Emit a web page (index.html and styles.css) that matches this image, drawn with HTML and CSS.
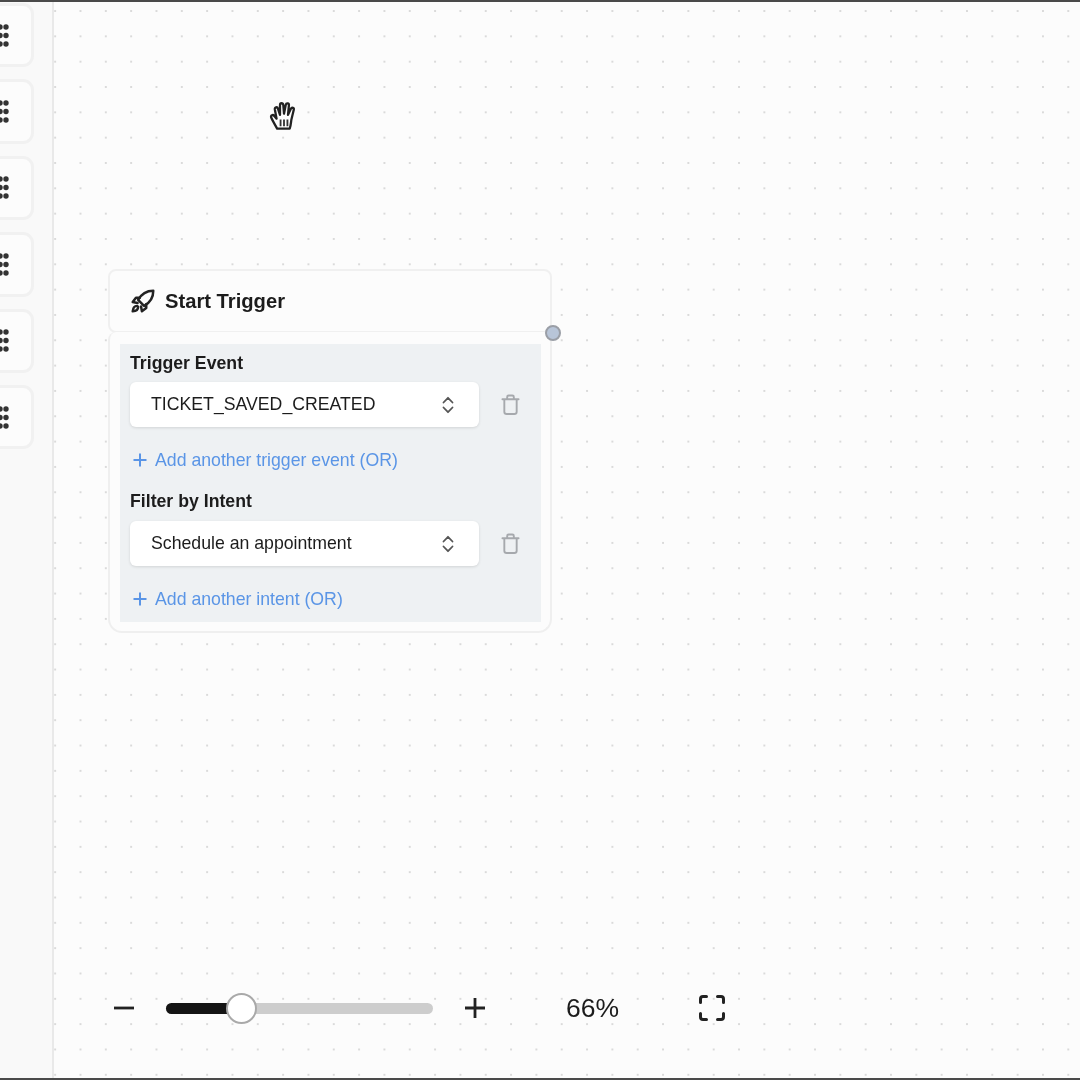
FILE: index.html
```html
<!DOCTYPE html>
<html lang="en">
<head>
<meta charset="utf-8">
<title>Start Trigger</title>
<link rel="stylesheet" href="styles.css">
</head>
<body>
<div class="app">
  <div class="edge"></div>
  <div class="main">
    <aside class="sidebar">
      <div class="tool"><svg class="grip" viewBox="0 0 12 23"><g><circle cx="3" cy="3" r="2.7"/><circle cx="9" cy="3" r="2.7"/><circle cx="3" cy="11.500" r="2.7"/><circle cx="9" cy="11.500" r="2.7"/><circle cx="3" cy="20" r="2.7"/><circle cx="9" cy="20" r="2.7"/></g></svg></div>
      <div class="tool"><svg class="grip" viewBox="0 0 12 23"><g><circle cx="3" cy="3" r="2.7"/><circle cx="9" cy="3" r="2.7"/><circle cx="3" cy="11.500" r="2.7"/><circle cx="9" cy="11.500" r="2.7"/><circle cx="3" cy="20" r="2.7"/><circle cx="9" cy="20" r="2.7"/></g></svg></div>
      <div class="tool"><svg class="grip" viewBox="0 0 12 23"><g><circle cx="3" cy="3" r="2.7"/><circle cx="9" cy="3" r="2.7"/><circle cx="3" cy="11.500" r="2.7"/><circle cx="9" cy="11.500" r="2.7"/><circle cx="3" cy="20" r="2.7"/><circle cx="9" cy="20" r="2.7"/></g></svg></div>
      <div class="tool"><svg class="grip" viewBox="0 0 12 23"><g><circle cx="3" cy="3" r="2.7"/><circle cx="9" cy="3" r="2.7"/><circle cx="3" cy="11.500" r="2.7"/><circle cx="9" cy="11.500" r="2.7"/><circle cx="3" cy="20" r="2.7"/><circle cx="9" cy="20" r="2.7"/></g></svg></div>
      <div class="tool"><svg class="grip" viewBox="0 0 12 23"><g><circle cx="3" cy="3" r="2.7"/><circle cx="9" cy="3" r="2.7"/><circle cx="3" cy="11.500" r="2.7"/><circle cx="9" cy="11.500" r="2.7"/><circle cx="3" cy="20" r="2.7"/><circle cx="9" cy="20" r="2.7"/></g></svg></div>
      <div class="tool"><svg class="grip" viewBox="0 0 12 23"><g><circle cx="3" cy="3" r="2.7"/><circle cx="9" cy="3" r="2.7"/><circle cx="3" cy="11.500" r="2.7"/><circle cx="9" cy="11.500" r="2.7"/><circle cx="3" cy="20" r="2.7"/><circle cx="9" cy="20" r="2.7"/></g></svg></div>
    </aside>
    <main class="canvas">
      <svg class="hand" viewBox="0 0 26 28"><path class="hand-shape" d="M7 25C5 21.500 3 18 1.800 15.300C1.200 13.300 3.300 12.400 4.500 14L6.500 16.300L5 8.300C4.700 6.200 7.100 5.600 7.700 7.600L9.500 13L9.500 4.500C9.500 2.300 12.100 2.300 12.400 4.500L13 12L14.500 4.300C15 2.200 17.600 2.600 17.300 4.700L16.500 13L19 7.700C19.900 6 22.100 6.900 21.500 8.800L19.500 17C19 20 19 22.500 18 25Z"/><path class="hand-lines" d="M10 17V23M13 17V23M16 17V23"/></svg>

      <section class="node">
        <header class="node-head">
          <svg class="rocket" viewBox="0 0 24 24"><path d="M21.500 2.500C15 2.500 10.500 5.500 7.500 11L13 16.500C18.500 13.500 21.500 9 21.500 2.500Z"/><path d="M9 9H5.500L2.500 13L7 13.800"/><path d="M15 15V18.500L11 21.500L10.200 17"/><path d="M6.500 16.500C4.500 16.500 2.800 18 2.500 21.500C6 21.200 7.500 19.500 7.500 17.500Z"/></svg>
          <h2 class="node-title">Start Trigger</h2>
        </header>
        <span class="handle"></span>
        <div class="node-body">
          <div class="panel">
            <div class="field-label">Trigger Event</div>
            <div class="field-row">
              <div class="select"><span>TICKET_SAVED_CREATED</span><svg class="chevrons" viewBox="0 0 14 20"><path d="M2.500 7.500L7 2.800L11.500 7.500M2.500 12.500L7 17.200L11.500 12.500"/></svg></div>
              <svg class="trash" viewBox="0 0 20 22"><path d="M3.500 6V18.500C3.500 19.900 4.600 21 6 21H14C15.400 21 16.500 19.900 16.500 18.500V6M1.500 5.500H18.500M6.500 5.500V3C6.500 2 7.200 1.500 8 1.500H12C12.800 1.500 13.500 2 13.500 3V5.500"/></svg>
            </div>
            <div class="add-link"><svg class="plus-small" viewBox="0 0 14 14"><path d="M7 .5V13.500M.5 7H13.500"/></svg><span>Add another trigger event (OR)</span></div>
            <div class="field-label second">Filter by Intent</div>
            <div class="field-row">
              <div class="select"><span>Schedule an appointment</span><svg class="chevrons" viewBox="0 0 14 20"><path d="M2.500 7.500L7 2.800L11.500 7.500M2.500 12.500L7 17.200L11.500 12.500"/></svg></div>
              <svg class="trash" viewBox="0 0 20 22"><path d="M3.500 6V18.500C3.500 19.900 4.600 21 6 21H14C15.400 21 16.500 19.900 16.500 18.500V6M1.500 5.500H18.500M6.500 5.500V3C6.500 2 7.200 1.500 8 1.500H12C12.800 1.500 13.500 2 13.500 3V5.500"/></svg>
            </div>
            <div class="add-link last"><svg class="plus-small" viewBox="0 0 14 14"><path d="M7 .5V13.500M.5 7H13.500"/></svg><span>Add another intent (OR)</span></div>
          </div>
        </div>
      </section>

      <div class="zoom-bar">
        <svg class="zoom-btn" viewBox="0 0 20 20"><path d="M0 10H20"/></svg>
        <div class="track"><div class="fill"></div><div class="thumb"></div></div>
        <svg class="zoom-btn" viewBox="0 0 20 20"><path d="M0 10H20M10 0V20"/></svg>
        <span class="zoom-value">66%</span>
        <svg class="fit" viewBox="0 0 26 26"><path d="M1.500 7.500V4C1.500 2.500 2.500 1.500 4 1.500H7.500M18.500 1.500H22C23.500 1.500 24.500 2.500 24.500 4V7.500M24.500 18.500V22C24.500 23.500 23.500 24.500 22 24.500H18.500M7.500 24.500H4C2.500 24.500 1.500 23.500 1.500 22V18.500"/></svg>
      </div>
    </main>
  </div>
  <div class="edge"></div>
</div>
</body>
</html>
```
FILE: styles.css
```css
* { box-sizing: border-box; }
html, body { margin: 0; padding: 0; }
body {
  width: 1080px;
  height: 1080px;
  overflow: hidden;
  background: #fcfcfc;
  font-family: "Liberation Sans", Arial, sans-serif;
  color: #1c1c1c;
}
.app { display: flex; flex-direction: column; height: 1080px; filter: blur(.35px); }
.edge { height: 2px; flex: none; background: #4a4a4a; }
.main { flex: 1; display: flex; min-height: 0; }

.sidebar {
  width: 54px;
  flex: none;
  display: flex;
  flex-direction: column;
  gap: 12px;
  padding-top: 1px;
  overflow: hidden;
  background: #f9f9f9;
  border-right: 2px solid #e9e9e9;
}
.tool {
  width: 65px;
  height: 64.400px;
  flex: none;
  margin-left: -31px;
  display: flex;
  align-items: center;
  justify-content: flex-end;
  padding-right: 22px;
  background: #fcfcfc;
  border: 3px solid #f1f1f1;
  border-radius: 11px;
}
.grip { width: 12px; height: 23px; flex: none; fill: #333; }

.canvas {
  position: relative;
  flex: 1;
  background-color: #fcfcfc;
  background-image: radial-gradient(circle, #dadada 0, #dadada 1px, transparent 1.500px);
  background-size: 25.330px 25.330px;
  background-position: -11.500px -3.670px;
}
.hand { position: absolute; left: 215px; top: 98px; width: 30px; height: 32px; }
.hand-shape { fill: #fff; stroke: #222; stroke-width: 2; stroke-linejoin: round; }
.hand-lines { fill: none; stroke: #333; stroke-width: 1.600; }

.node { position: absolute; left: 54px; top: 267px; width: 444px; }
.node-head {
  height: 64px;
  display: flex;
  align-items: center;
  gap: 9px;
  padding-left: 20px;
  background: #fcfcfc;
  border: 2px solid #f0f0f0;
  border-radius: 8px;
}
.rocket { width: 26px; height: 26px; fill: none; stroke: #222; stroke-width: 2.300; stroke-linecap: round; stroke-linejoin: round; }
.node-title { margin: 0; font-size: 20.200px; font-weight: 700; line-height: 24px; }
.handle {
  position: absolute;
  right: -9px;
  top: 56px;
  width: 16px;
  height: 16px;
  border-radius: 50%;
  background: #b8c5d8;
  border: 2px solid #9a9ea6;
}
.node-body {
  padding: 12px 9px 9px 10px;
  margin-top: -1px;
  background: #fcfcfc;
  border: 2px solid #efefef;
  border-top: 0;
  border-radius: 8px 8px 14px 14px;
}
.panel { height: 278px; padding: 7px 10px 0; background: #eef1f3; }
.field-label { font-size: 17.700px; font-weight: 700; line-height: 24px; margin-bottom: 7px; }
.field-label.second { margin-top: 17px; margin-bottom: 8px; }
.field-row { display: flex; align-items: center; }
.select {
  width: 349px;
  height: 45px;
  display: flex;
  align-items: center;
  justify-content: space-between;
  padding: 0 24px 0 21px;
  background: #fff;
  border-radius: 6px;
  box-shadow: 0 1px 3px rgba(0, 0, 0, .12);
  font-size: 17.700px;
}
.chevrons { width: 14px; height: 20px; fill: none; stroke: #555; stroke-width: 1.800; stroke-linecap: round; stroke-linejoin: round; }
.trash { width: 19px; height: 21px; margin-left: 22px; fill: none; stroke: #a6a9ad; stroke-width: 2; stroke-linecap: round; stroke-linejoin: round; }
.add-link {
  display: flex;
  align-items: center;
  gap: 8px;
  margin-top: 21px;
  padding-left: 3px;
  height: 24px;
  color: #5a95e6;
  font-size: 17.700px;
  line-height: 24px;
}
.plus-small { width: 14px; height: 14px; fill: none; stroke: #5a95e6; stroke-width: 2; }
.add-link.last { margin-top: 21px; }

.zoom-bar {
  position: absolute;
  left: 60px;
  top: 986px;
  height: 40px;
  display: flex;
  align-items: center;
}
.zoom-btn { width: 20px; height: 20px; flex: none; fill: none; stroke: #222; stroke-width: 2.800; }
.track { position: relative; width: 267px; height: 11px; margin: 0 32px; background: #cdcdcd; border-radius: 6px; }
.fill { width: 72px; height: 11px; background: #141414; border-radius: 6px 0 0 6px; }
.thumb {
  position: absolute;
  left: 60px;
  top: -10px;
  width: 31px;
  height: 31px;
  background: #fff;
  border: 2px solid #a9a9a9;
  border-radius: 50%;
}
.zoom-value { margin-left: 81px; width: 53px; font-size: 26.500px; line-height: 30px; color: #1c1c1c; }
.fit { width: 26px; height: 26px; margin-left: 80px; fill: none; stroke: #222; stroke-width: 3; stroke-linecap: round; }
```
